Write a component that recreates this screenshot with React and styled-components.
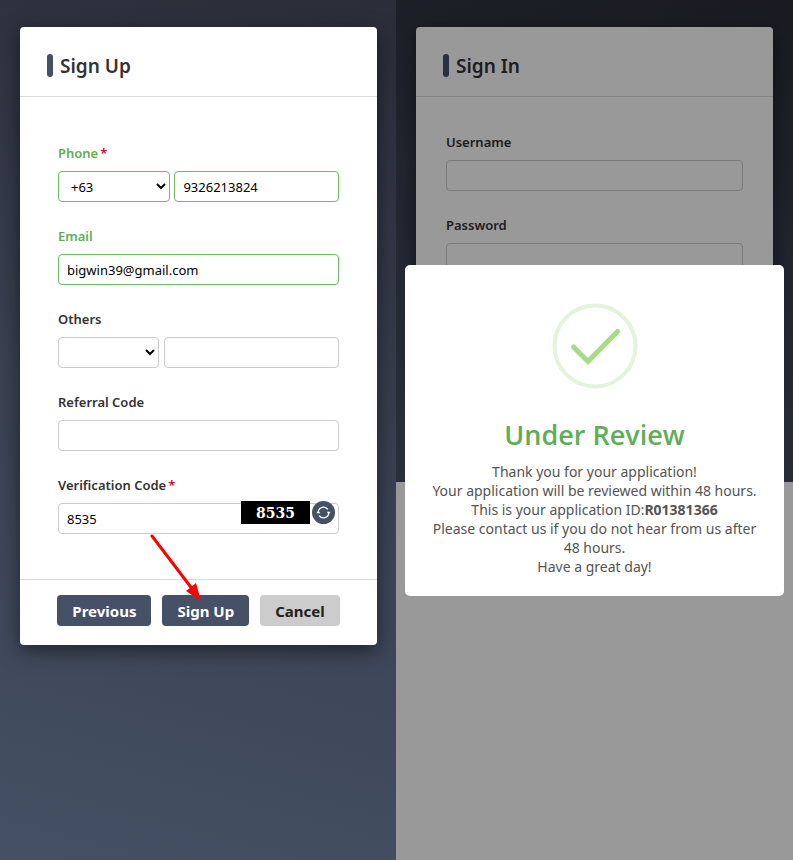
import React, { useState } from "react";
import styled, { createGlobalStyle } from "styled-components";

const GlobalStyle = createGlobalStyle`
    * {
        box-sizing: border-box;
    }

    body {
        margin: 0;
        font-family: "Noto Sans", "Open Sans", sans-serif;
        color: #333;
    }

    button, input, select {
        font-family: inherit;
    }
`

const Page = styled.main`
    display: grid;
    grid-template-columns: 396fr 397fr;
    min-height: 100vh;
`

const Screen = styled.section`
    position: relative;
    background-color: white;
`

const Backdrop = styled.div`
    min-height: ${(props) => props.$height};
    padding: 27px ${(props) => props.$right || "20px"} 0 20px;
    background: linear-gradient(15deg, #455064, #3a4152 50%, #2b2d38);
`

const Card = styled.div`
    background-color: white;
    border-radius: 4px;
    box-shadow: 0 6px 20px rgba(0, 0, 0, 0.5);
`

const CardHeader = styled.header`
    display: flex;
    align-items: center;
    height: 70px;
    padding: 8px 27px 0 27px;
    border-bottom: 1px solid #ddd;
`

const TitleBar = styled.span`
    width: 6px;
    height: 23px;
    margin: 0 7px 0 0;
    border-radius: 3px;
    background-color: #465066;
`

const Title = styled.h1`
    margin: 0;
    font-size: 19px;
    font-weight: 600;
    line-height: 24px;
`

const CardBody = styled.div`
    display: flex;
    flex-direction: column;
    gap: 24px;
    padding: ${(props) => props.$padding};
`

const FieldLabel = styled.label`
    display: block;
    margin-bottom: 8px;
    font-size: 13px;
    font-weight: 600;
    line-height: 20px;
    color: ${(props) => (props.$valid ? "#5fae57" : "#333")};
`

const Required = styled.span`
    margin-left: 2px;
    color: #c8102e;
`

const FieldRow = styled.div`
    position: relative;
    display: flex;
    gap: ${(props) => props.$gap || "4px"};
`

const Input = styled.input`
    flex: 1;
    min-width: 0;
    height: 31px;
    padding: 0 8px;
    border: 1px solid ${(props) => (props.$valid ? "#6fba68" : "#ccc")};
    border-radius: 4px;
    outline: none;
    background-color: white;
    color: black;
    font-size: 13px;
`

const Select = styled.select`
    width: ${(props) => props.$width};
    height: 31px;
    padding: 0 0 0 8px;
    border: 1px solid ${(props) => (props.$valid ? "#6fba68" : "#ccc")};
    border-radius: 4px;
    background-color: white;
    color: black;
    font-size: 13px;
`

/* captcha sits on top of the input */
const Captcha = styled.div`
    position: absolute;
    top: -2px;
    right: 4px;
    display: flex;
    gap: 2px;
`

const CaptchaCode = styled.span`
    width: 69px;
    height: 23px;
    background-color: black;
    color: white;
    font-family: "DejaVu Serif", serif;
    font-size: 14px;
    font-weight: bold;
    line-height: 24px;
    text-align: center;
`

const RefreshButton = styled.button`
    display: flex;
    align-items: center;
    justify-content: center;
    width: 23px;
    height: 23px;
    padding: 0;
    border: none;
    border-radius: 50%;
    background-color: #465066;
    cursor: pointer;
`

const CardFooter = styled.footer`
    display: flex;
    justify-content: center;
    gap: 11px;
    padding: 15px 0 19px 0;
    border-top: 1px solid #ddd;
`

const ButtonWrap = styled.div`
    position: relative;
`

const Button = styled.button`
    height: 31px;
    padding: 0 15px;
    border: none;
    border-radius: 4px;
    background-color: ${(props) => (props.$light ? "#ccc" : "#465066")};
    color: ${(props) => (props.$light ? "#222" : "white")};
    font-size: 15px;
    font-weight: bold;
    line-height: 28px;
    cursor: pointer;
`

const Arrow = styled.svg`
    position: absolute;
    top: -61px;
    left: -12px;
    pointer-events: none;
`

const Overlay = styled.div`
    position: absolute;
    inset: 0;
    display: flex;
    align-items: center;
    padding: 0 9px;
    background-color: rgba(0, 0, 0, 0.4);
`

const Modal = styled.div`
    display: flex;
    flex-direction: column;
    align-items: center;
    width: 100%;
    padding: 38px 22px 20px 22px;
    border-radius: 5px;
    background-color: white;
    text-align: center;
`

const ModalTitle = styled.h2`
    margin: 27px 0 8px 0;
    color: #5fae57;
    font-family: "Open Sans", "Noto Sans", sans-serif;
    font-size: 27px;
    font-weight: 600;
    line-height: 38px;
`

const ModalText = styled.p`
    margin: 0;
    color: #545454;
    font-size: 14px;
    line-height: 19px;
`

const RefreshIcon = () => (
    <svg width="15" height="15" viewBox="0 0 15 15" fill="none" stroke="white" strokeWidth="1.3">
        <path d="M2.3 7A5.2 5.2 0 0 1 11.8 4.4M12.7 8A5.2 5.2 0 0 1 3.2 10.6" />
        <path d="M.4 8.2L2.2 5.8L4.4 8.2ZM10.6 6.8L12.8 9.2L14.6 6.8Z" fill="white" stroke="none" />
    </svg>
)

const SuccessIcon = () => (
    <svg width="86" height="86" viewBox="0 0 86 86" fill="none">
        <circle cx="43" cy="43" r="40.5" stroke="#e4f4dc" strokeWidth="4" />
        <path d="M21.5 44L36 58.5L65.5 28.5" stroke="#a5dc86" strokeWidth="5" strokeLinecap="round" />
    </svg>
)

const SignUp = () => {
    const [form, setForm] = useState({
        areaCode: "+63",
        phone: "9326213824",
        email: "bigwin39@gmail.com",
        otherType: "",
        other: "",
        referral: "",
        code: "8535",
    })

    const handleChange = (e) => setForm({ ...form, [e.target.name]: e.target.value })

    return (
        <Screen>
            <Backdrop $height="100%" $right="19px">
                <Card>
                    <CardHeader>
                        <TitleBar />
                        <Title>Sign Up</Title>
                    </CardHeader>
                    <CardBody $padding="46px 38px 45px 38px">
                        <div>
                            <FieldLabel htmlFor="phone" $valid>Phone<Required>*</Required></FieldLabel>
                            <FieldRow>
                                <Select name="areaCode" aria-label="Area code" $valid $width="40%" value={form.areaCode} onChange={handleChange}>
                                    <option>+63</option>
                                </Select>
                                <Input id="phone" name="phone" $valid value={form.phone} onChange={handleChange} />
                            </FieldRow>
                        </div>
                        <div>
                            <FieldLabel htmlFor="email" $valid>Email</FieldLabel>
                            <FieldRow>
                                <Input id="email" name="email" $valid value={form.email} onChange={handleChange} />
                            </FieldRow>
                        </div>
                        <div>
                            <FieldLabel htmlFor="other">Others</FieldLabel>
                            <FieldRow $gap="5px">
                                <Select name="otherType" aria-label="Contact type" $width="36%" value={form.otherType} onChange={handleChange}>
                                    <option value=""></option>
                                </Select>
                                <Input id="other" name="other" value={form.other} onChange={handleChange} />
                            </FieldRow>
                        </div>
                        <div>
                            <FieldLabel htmlFor="referral">Referral Code</FieldLabel>
                            <FieldRow>
                                <Input id="referral" name="referral" value={form.referral} onChange={handleChange} />
                            </FieldRow>
                        </div>
                        <div>
                            <FieldLabel htmlFor="code">Verification Code<Required>*</Required></FieldLabel>
                            <FieldRow>
                                <Input id="code" name="code" value={form.code} onChange={handleChange} />
                                <Captcha>
                                    <CaptchaCode>8535</CaptchaCode>
                                    <RefreshButton type="button" aria-label="Refresh code">
                                        <RefreshIcon />
                                    </RefreshButton>
                                </Captcha>
                            </FieldRow>
                        </div>
                    </CardBody>
                    <CardFooter>
                        <Button type="button">Previous</Button>
                        <ButtonWrap>
                            <Button type="button">Sign Up</Button>
                            <Arrow width="54" height="68" viewBox="0 0 54 68">
                                <path d="M2 2L43 56" stroke="red" strokeWidth="3" strokeLinecap="round" />
                                <path d="M51 67L36 57L46 49Z" fill="red" />
                            </Arrow>
                        </ButtonWrap>
                        <Button type="button" $light>Cancel</Button>
                    </CardFooter>
                </Card>
            </Backdrop>
        </Screen>
    )
}

const SignIn = () => (
    <Screen>
        <Backdrop $height="56vh">
            <Card>
                <CardHeader>
                    <TitleBar />
                    <Title>Sign In</Title>
                </CardHeader>
                <CardBody $padding="35px 30px 120px 30px">
                    <div>
                        <FieldLabel htmlFor="username">Username</FieldLabel>
                        <FieldRow>
                            <Input id="username" />
                        </FieldRow>
                    </div>
                    <div>
                        <FieldLabel htmlFor="password">Password</FieldLabel>
                        <FieldRow>
                            <Input id="password" type="password" />
                        </FieldRow>
                    </div>
                </CardBody>
            </Card>
        </Backdrop>
        <Overlay>
            <Modal role="dialog" aria-labelledby="modal-title">
                <SuccessIcon />
                <ModalTitle id="modal-title">Under Review</ModalTitle>
                <ModalText>
                    Thank you for your application!<br />
                    Your application will be reviewed within 48 hours.<br />
                    This is your application ID:<b>R01381366</b><br />
                    Please contact us if you do not hear from us after 48 hours.<br />
                    Have a great day!
                </ModalText>
            </Modal>
        </Overlay>
    </Screen>
)

const App = () => {
    return (
        <>
            <GlobalStyle />
            <Page>
                <SignUp />
                <SignIn />
            </Page>
        </>
    );
}

export default App;
